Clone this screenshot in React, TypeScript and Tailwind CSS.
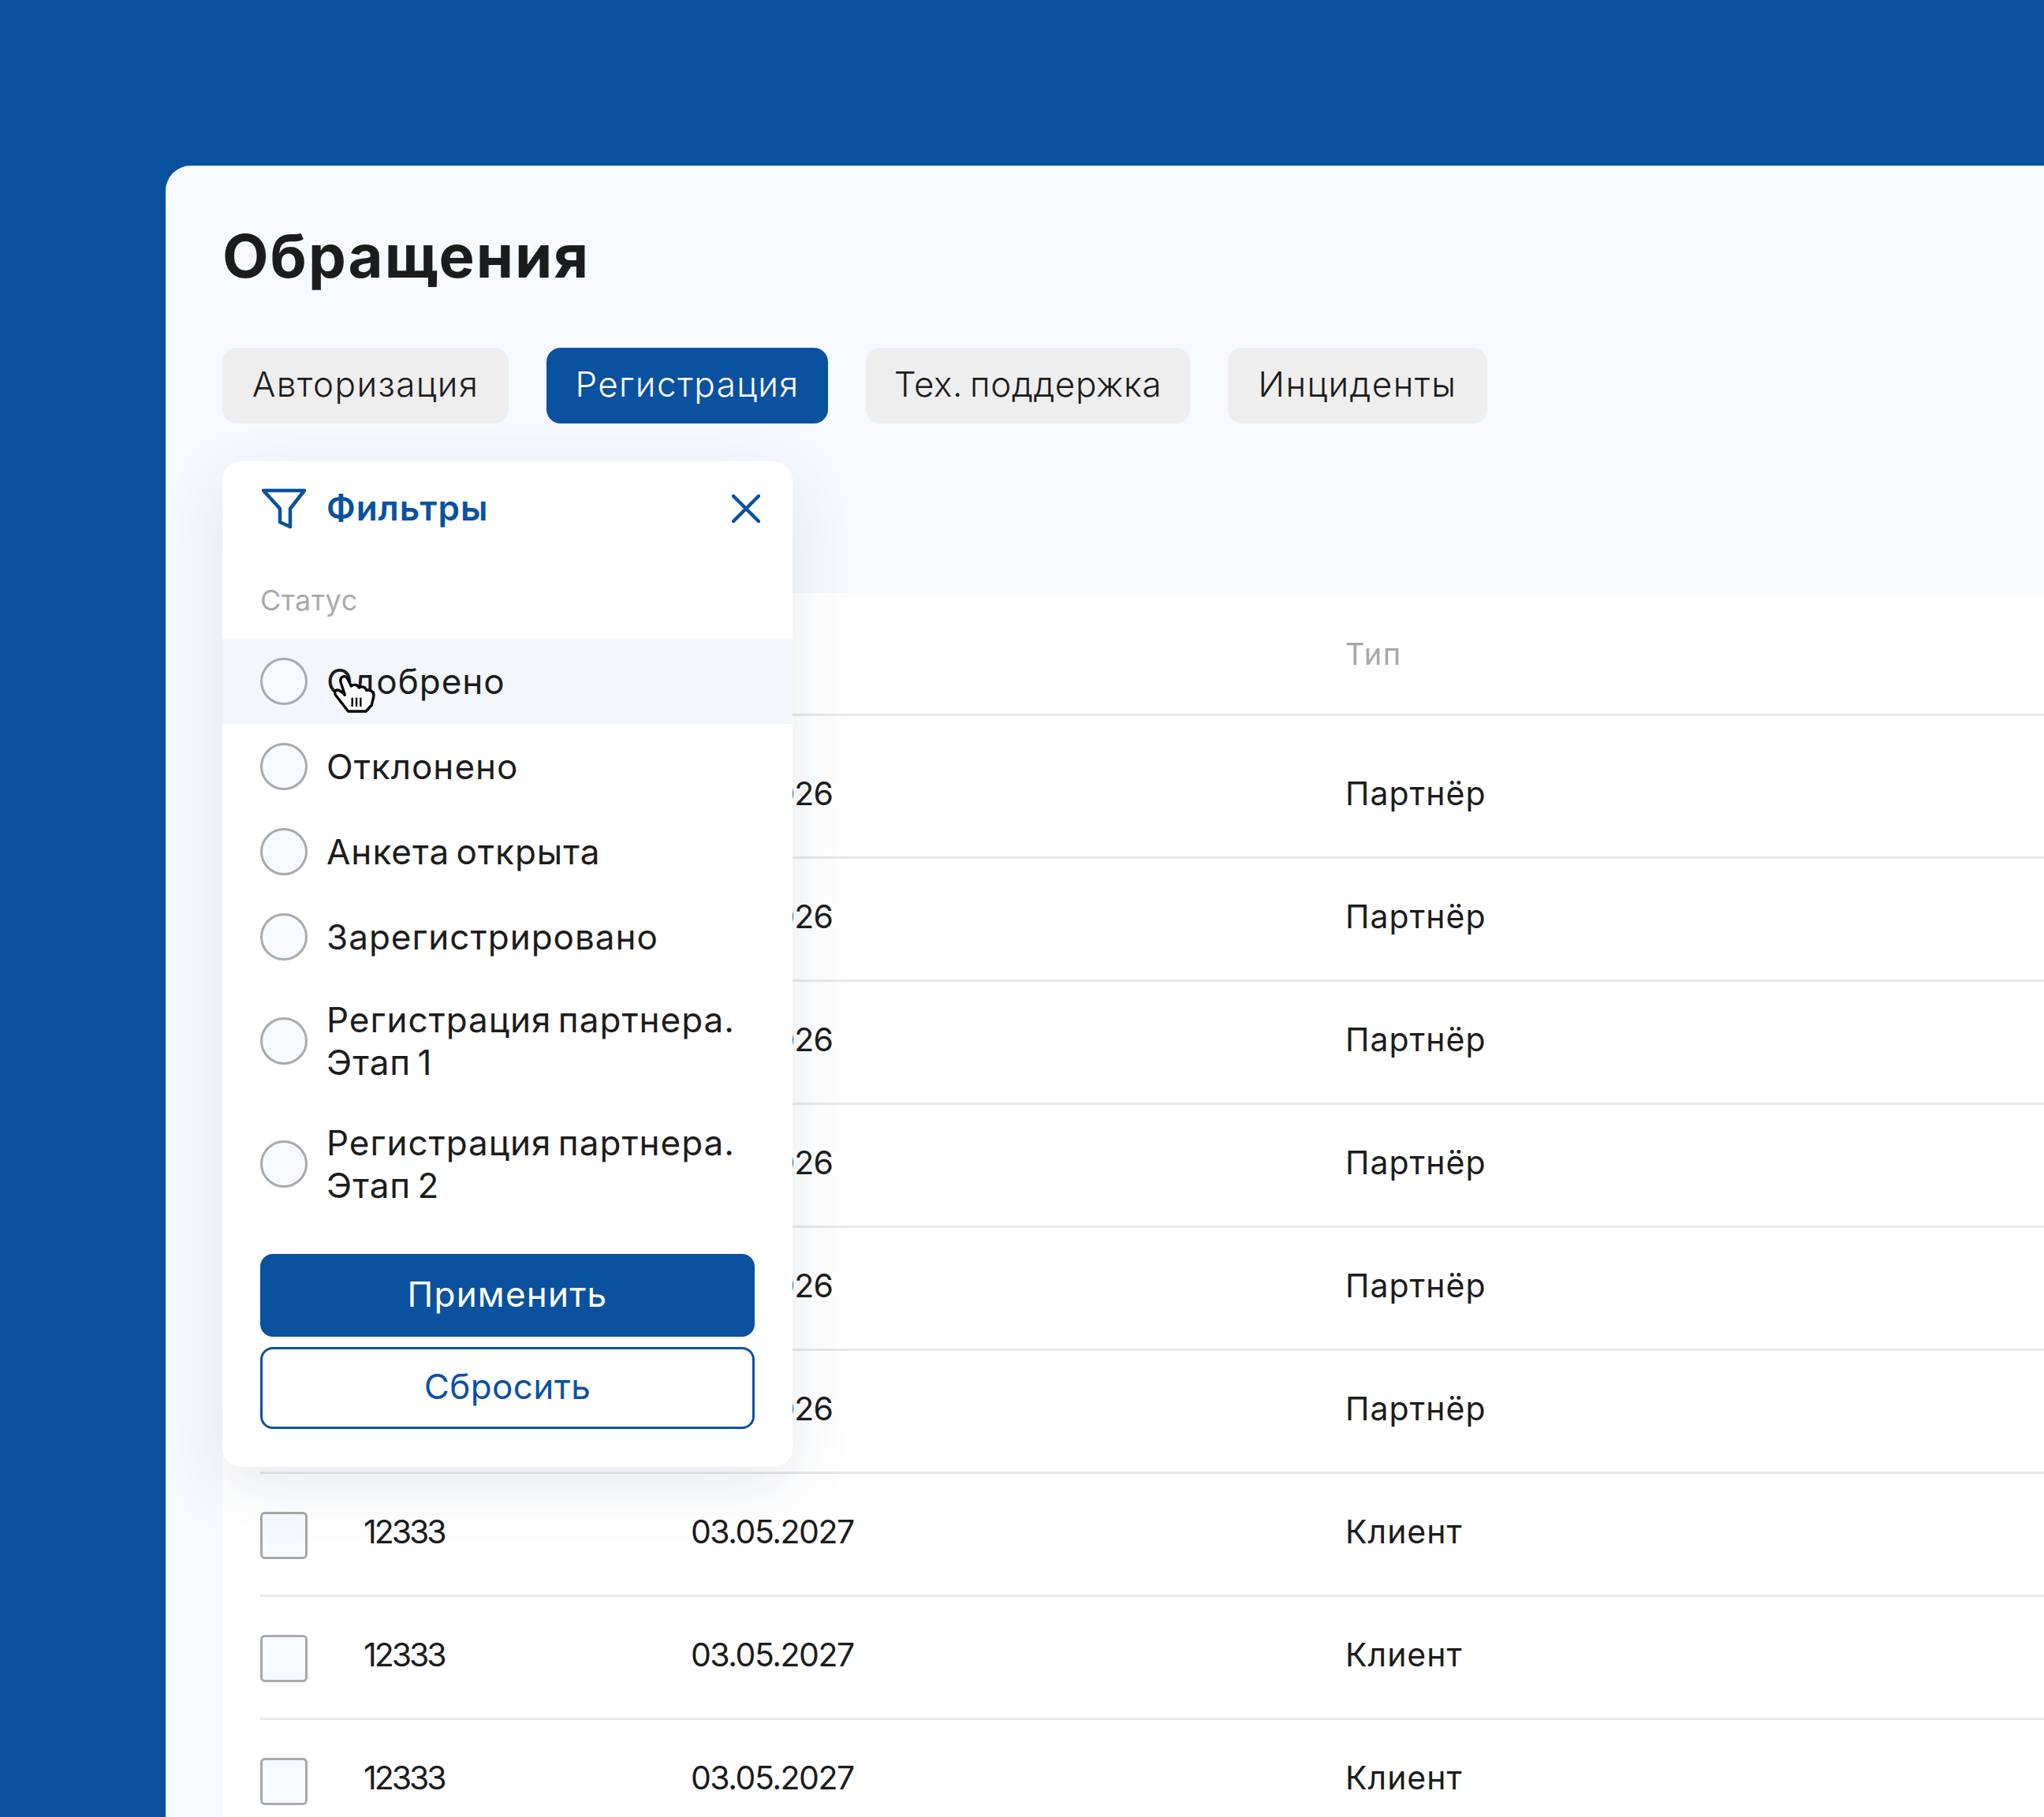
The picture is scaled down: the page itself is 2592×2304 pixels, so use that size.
const tabs = [
  { label: 'Авторизация', w: 'w-[363px] tracking-[1.4px]', active: false },
  { label: 'Регистрация', w: 'w-[357px] tracking-[1.4px]', active: true },
  { label: 'Тех. поддержка', w: 'w-[411px] tracking-[0.6px] [word-spacing:-4px]', active: false },
  { label: 'Инциденты', w: 'w-[329px] tracking-[1.4px]', active: false },
];

const statuses = [
  { label: 'Одобрено', hover: true },
  { label: 'Отклонено' },
  { label: 'Анкета открыта' },
  { label: 'Зарегистрировано' },
  { label: 'Регистрация партнера.\nЭтап 1', tall: true },
  { label: 'Регистрация партнера.\nЭтап 2', tall: true },
];

const partner = { date: '11.11.2026', dateClass: 'tracking-[-0.8px]', type: 'Партнёр' };
const client = { date: '03.05.2027', dateClass: 'tracking-[-1.5px]', type: 'Клиент' };
const rows = [partner, partner, partner, partner, partner, partner, client, client, client];

const FilterIcon = () => (
  <svg width="56" height="52" viewBox="0 0 56 52" fill="none" className="ml-[2px]">
    <path
      d="M2 3H54L36 26V49L23 43V26L2 3Z"
      stroke="#0a51a0"
      strokeWidth="4.5"
      strokeLinejoin="round"
    />
  </svg>
);

const CloseIcon = () => (
  <svg width="36" height="36" viewBox="0 0 36 36" fill="none">
    <path d="M2 2L34 34M34 2L2 34" stroke="#0a51a0" strokeWidth="4.5" strokeLinecap="round" />
  </svg>
);

const HandCursor = () => (
  <svg
    className="absolute left-[138px] top-[43px]"
    width="60"
    height="54"
    viewBox="60 65 180 162"
    fill="none"
  >
    <path
      d="M125 212L78 152C70 142 74 130 85 131C95 132 104 142 112 150L96 100C92 84 108 72 120 84L136 116C146 108 160 110 166 122C176 116 190 118 194 132C206 128 222 136 222 152L214 188L192 212Z"
      fill="white"
      stroke="black"
      strokeWidth="10"
      strokeLinejoin="round"
    />
    <path d="M140 160V194M156 160V194M172 160V194" stroke="black" strokeWidth="7" />
  </svg>
);

const App = () => {
  return (
    <div className="w-[2592px] h-[2304px] overflow-hidden bg-[#0a51a0] pl-[210px] pt-[210px] font-['Inter',sans-serif] text-[#1c1c1c]">
      <div className="relative h-full rounded-tl-[32px] bg-[#f6faff] pl-[72px] pt-[70px]">
        <h1 className="text-[76px] leading-[88px] font-bold tracking-[2px]">Обращения</h1>

        <div className="mt-[73px] flex gap-[48px]">
          {tabs.map((tab) => (
            <div
              key={tab.label}
              className={`${tab.w} ${
                tab.active ? 'bg-[#0a51a0] text-white' : 'bg-[#eeeeee] text-[#1c1c1c]'
              } flex h-[96px] items-center justify-center rounded-[18px] pb-[4px] text-[44px] font-light`}
            >
              {tab.label}
            </div>
          ))}
        </div>

        <div className="mt-[215px] bg-white pl-[48px] text-[41px] tracking-[1px]">
          <div className="grid h-[156px] grid-cols-[131px_415px_830px_1fr] items-center border-b-[3px] border-[#e8e8e8] text-[#a8a8a8]">
            <div />
            <div />
            <div />
            <div className="pt-[2px] text-[38px] tracking-[1.4px]">Тип</div>
          </div>
          <div className="pt-[25px]">
            {rows.map((row, i) => (
              <div
                key={i}
                className="grid h-[156px] grid-cols-[131px_415px_830px_1fr] items-center border-b-[3px] border-[#e8e8e8]"
              >
                <div className="mt-[3px] h-[60px] w-[60px] rounded-[6px] border-[3px] border-[#a8a8a8] bg-[#f6faff]" />
                <div className="pb-[6px] tracking-[-3px]">12333</div>
                <div className={`pb-[6px] ${row.dateClass}`}>{row.date}</div>
                <div className="pb-[6px]">{row.type}</div>
              </div>
            ))}
          </div>
        </div>

        <div className="absolute left-[72px] top-[375px] w-[723px] rounded-[24px] bg-white pb-[48px] shadow-[0_24px_80px_rgba(30,50,90,0.1)]">
          <div className="flex h-[120px] items-center px-[48px]">
            <FilterIcon />
            <div className="ml-[26px] flex-1 pb-[2px] text-[44px] font-semibold tracking-[1px] text-[#0a51a0]">
              Фильтры
            </div>
            <div className="-mr-[7px]">
              <CloseIcon />
            </div>
          </div>
          <div className="flex h-[105px] items-center px-[48px] pt-[6px] text-[36px] tracking-[0.5px] text-[#aaaaaa]">
            Статус
          </div>
          <div className="relative">
            {statuses.map((item) => (
              <div
                key={item.label}
                className={`${item.tall ? 'h-[156px]' : 'h-[108px]'} ${
                  item.hover ? 'bg-[#f3f7fc]' : ''
                } flex items-center gap-[24px] px-[48px]`}
              >
                <div className="h-[60px] w-[60px] shrink-0 rounded-full border-[3px] border-[#aaaaaa] bg-[#f6faff]" />
                <div className="whitespace-pre-line text-[44px] leading-[54px] tracking-[1px] [word-spacing:-5px]">
                  {item.label}
                </div>
              </div>
            ))}
            <HandCursor />
          </div>
          <div className="mt-[36px] flex flex-col gap-[13px] px-[48px] text-[44px]">
            <div className="flex h-[105px] items-center justify-center rounded-[16px] bg-[#0a51a0] pb-[3px] tracking-[1.2px] text-white">
              Применить
            </div>
            <div className="flex h-[104px] items-center justify-center rounded-[16px] border-[3px] border-[#0a51a0] pb-[5px] tracking-[0.4px] text-[#0a51a0]">
              Сбросить
            </div>
          </div>
        </div>
      </div>
    </div>
  );
};

export default App;
